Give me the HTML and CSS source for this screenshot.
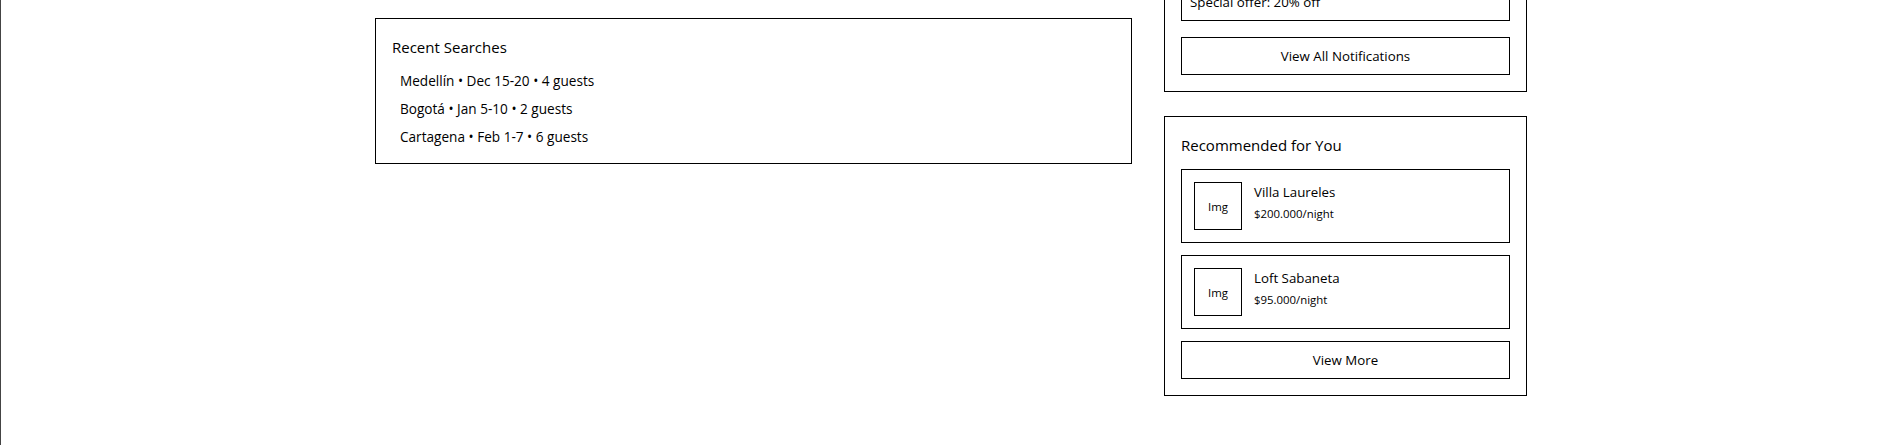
FILE: index.html
```html
<!DOCTYPE html>
<html lang="en">
<head>
<meta charset="utf-8">
<title>Dashboard</title>
<link rel="stylesheet" href="styles.css">
</head>
<body>
<div class="page">
  <main class="main-col">
    <section class="card recent">
      <h3 class="card-title">Recent Searches</h3>
      <ul class="search-list">
        <li>Medellín • Dec 15-20 • 4 guests</li>
        <li>Bogotá • Jan 5-10 • 2 guests</li>
        <li>Cartagena • Feb 1-7 • 6 guests</li>
      </ul>
    </section>
  </main>
  <aside class="aside">
    <section class="card notifications">
      <div class="notif-list">
        <div class="notif">Special offer: 20% off</div>
      </div>
      <button class="btn btn-notif">View All Notifications</button>
    </section>
    <section class="card recommended">
      <h3 class="card-title">Recommended for You</h3>
      <div class="rec-list">
        <div class="rec">
          <div class="rec-img">Img</div>
          <div class="rec-info">
            <div class="rec-name">Villa Laureles</div>
            <div class="rec-price">$200.000/night</div>
          </div>
        </div>
        <div class="rec">
          <div class="rec-img">Img</div>
          <div class="rec-info">
            <div class="rec-name">Loft Sabaneta</div>
            <div class="rec-price">$95.000/night</div>
          </div>
        </div>
      </div>
      <button class="btn btn-more">View More</button>
    </section>
  </aside>
</div>
</body>
</html>
```

FILE: styles.css
```css
* {
  box-sizing: border-box;
}

html, body {
  margin: 0;
  padding: 0;
  background: #fff;
  color: #000;
  font-family: "Open Sans", "Noto Sans", sans-serif;
}

body {
  overflow: hidden;
  height: 445px;
}

.page {
  display: flex;
  align-items: flex-start;
  gap: 32px;
  padding: 18px 0 0 374px;
  border-left: 1px solid #444;
  min-height: 445px;
}

.main-col {
  width: 757px;
  flex: none;
}

.aside {
  width: 363px;
  flex: none;
  display: flex;
  flex-direction: column;
  gap: 24px;
  margin-top: -51px;
}

.card {
  border: 1px solid #000;
  padding: 16px;
  background: #fff;
}

.card-title {
  margin: 0 0 12px;
  font-size: 15px;
  font-weight: 400;
  line-height: 24px;
}

.search-list {
  list-style: none;
  margin: 0;
  padding: 0 0 0 8px;
  display: flex;
  flex-direction: column;
  gap: 8px;
}

.search-list li {
  font-size: 13.6px;
  line-height: 20px;
}

.notif-list {
  display: flex;
  flex-direction: column;
  gap: 8px;
}

.notif {
  border: 1px solid #000;
  padding: 8px;
  font-size: 13.3px;
  line-height: 19px;
}

.btn {
  display: block;
  width: 100%;
  border: 1px solid #000;
  background: #fff;
  color: #000;
  padding: 8px;
  font: inherit;
  font-size: 13.3px;
  line-height: 20px;
  text-align: center;
  border-radius: 0;
}

.btn-notif {
  margin-top: 16px;
}

.btn-more {
  margin-top: 12px;
}

.rec-list {
  display: flex;
  flex-direction: column;
  gap: 12px;
}

.rec {
  display: flex;
  align-items: flex-start;
  gap: 12px;
  border: 1px solid #000;
  padding: 12px;
}

.rec-img {
  width: 48px;
  height: 48px;
  flex: none;
  border: 1px solid #000;
  display: flex;
  align-items: center;
  justify-content: center;
  font-size: 11.4px;
}

.rec-name {
  font-size: 13.3px;
  line-height: 20px;
  margin-bottom: 4px;
}

.rec-price {
  font-size: 11.4px;
  line-height: 16px;
}
```
